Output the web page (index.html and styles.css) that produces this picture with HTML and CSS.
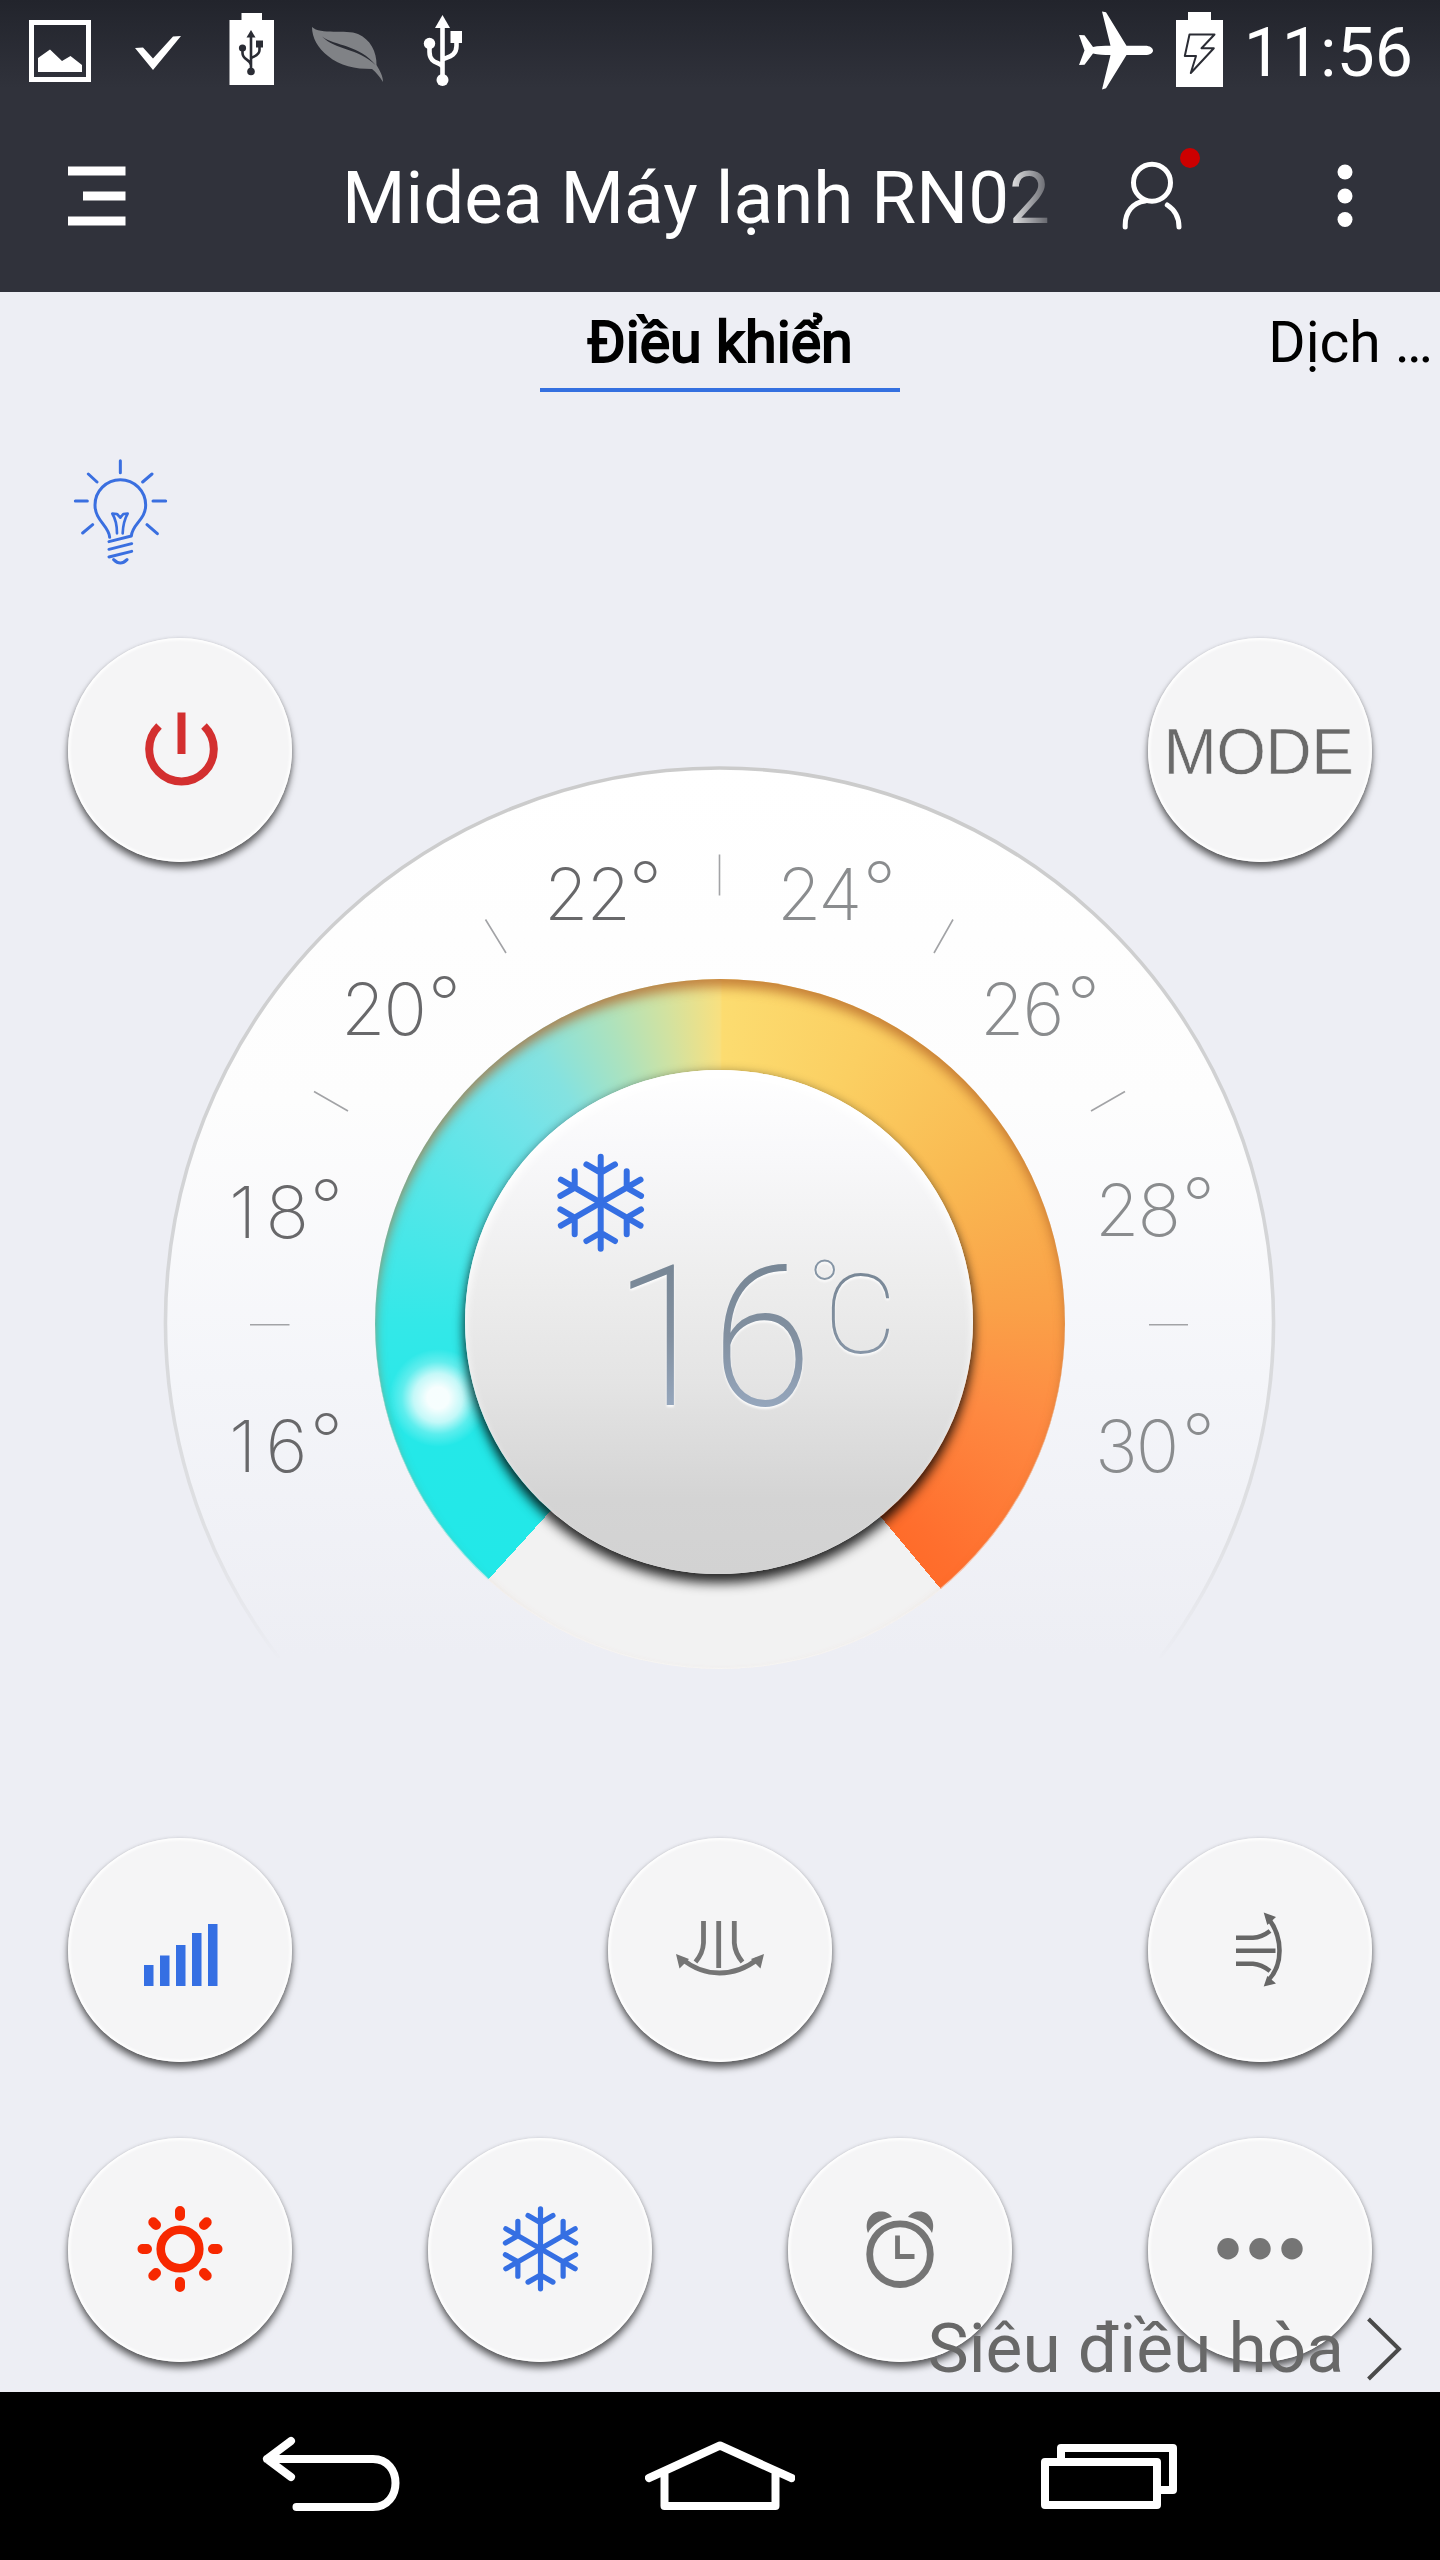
FILE: index.html
```html
<!DOCTYPE html>
<html lang="vi">
<head>
<meta charset="utf-8">
<title>Midea</title>
<link rel="stylesheet" href="styles.css">
</head>
<body>
<svg class="defs" width="0" height="0" aria-hidden="true">
  <defs>
    <g id="flake-arm"><path d="M0 0V-46M-14.3-38.3L0-30L14.3-38.3"/></g>
    <g id="flake">
      <use href="#flake-arm"/>
      <use href="#flake-arm" transform="rotate(60)"/>
      <use href="#flake-arm" transform="rotate(120)"/>
      <use href="#flake-arm" transform="rotate(180)"/>
      <use href="#flake-arm" transform="rotate(240)"/>
      <use href="#flake-arm" transform="rotate(300)"/>
    </g>
  </defs>
</svg>
<div class="screen">
  <header class="header">
    <div class="status">
      <div class="status-left">
        <svg viewBox="20 0 80 100" width="80" height="100"><path d="M31.500 22.500H88.500V79.500H31.500Z" fill="none" stroke="#fff" stroke-width="5"/><path d="M38 58L50 49.500L62 61L70.500 56L82 65V72H38Z" fill="#fff"/></svg>
        <svg viewBox="116 0 80 100" width="80" height="100"><path d="M135 48L143 47.500L153 58.500L173 36.500L181 36L153 70Z" fill="#fff"/></svg>
        <svg viewBox="212 0 80 100" width="80" height="100"><path d="M241.500 13H262V20H274V85H229.500V20H241.500Z" fill="#fff"/><g fill="#2a2c34" stroke="#2a2c34"><path d="M251 30L255.500 37.500H246.500Z" stroke="none"/><circle cx="251" cy="71.500" r="3.800" stroke="none"/><circle cx="242.500" cy="48" r="3.600" stroke="none"/><path d="M256 40.500H263V47.500H256Z" stroke="none"/><path d="M251 36V70M242.500 49V53C242.500 60 250 59 251 65M259.500 47V50C259.500 57 251 56 251 59" fill="none" stroke-width="2.600"/></g></svg>
        <svg viewBox="308 0 80 100" width="80" height="100"><path d="M312 27C320 35 346 29 358 34C370 39 377 52 376.500 65C380 71 383 76 383 82C379 76 376 72 372 69C355 69 340 66 328 56C318 48 312 38 312 27Z" fill="#808286"/><path d="M322 36.500C335 46 360 45 375.500 65C358 48 335 50 322 36.500Z" fill="#2a2c34"/></svg>
        <svg viewBox="404 0 80 100" width="80" height="100"><g fill="#fff" stroke="none"><path d="M442.500 15L450 28H435Z"/><circle cx="442.500" cy="80" r="6"/><circle cx="429.500" cy="43.500" r="5.700"/><path d="M450.500 31H462V43H450.500Z"/></g><path d="M442.500 26V78M429.500 46V52C429.500 64 441 62 442.500 67M456.500 42V46C456.500 58 444 57 442.500 60" fill="none" stroke="#fff" stroke-width="4.600"/></svg>
      </div>
      <div class="status-right">
        <svg viewBox="1070 0 100 100" width="100" height="100"><path d="M1079 35L1084.500 35.300L1093 47C1098 45.800 1104 45.800 1110.500 45.700L1102 11.500L1106 12.300L1126.500 45.700H1145C1150 45.700 1153 48 1153 50.500C1153 53 1150 55 1145 55H1126.500L1106 88.300L1102 89.500L1110.500 55C1104 55 1098 54.800 1093 53.500L1084.500 64.700L1079 65L1084.500 50.500Z" fill="#fff"/></svg>
        <svg viewBox="1170 0 60 100" width="60" height="100"><path d="M1188 12H1211V20H1223V87H1176V20H1188Z" fill="#fff"/><path d="M1189.500 34.500H1214.500L1201.500 48.300H1213.800L1190.800 73L1196 56H1184.800Z" fill="none" stroke="#2a2c34" stroke-width="2" stroke-linejoin="round"/></svg>
        <span class="clock">11:56</span>
      </div>
    </div>
    <div class="appbar">
      <svg class="menu" viewBox="0 0 58 60" width="58" height="60"><path d="M0 0.500H57.500V9.500H0ZM15 25.500H57.500V34.500H15ZM0 50.500H57.500V59.500H0Z" fill="#fff"/></svg>
      <h1 class="title">Midea Máy lạnh RN02</h1>
      <svg class="user" viewBox="1110 140 90 100" width="90" height="100"><g fill="none" stroke="#fff" stroke-width="5" stroke-linecap="round"><circle cx="1152" cy="182.700" r="18.500"/><path d="M1125.200 227V225C1125.200 212 1133 202.500 1145 201M1167.300 205C1175 210 1179 217 1179 227"/></g><circle cx="1190" cy="158" r="10" fill="#c00"/></svg>
      <svg class="more" viewBox="0 0 16 64" width="16" height="64"><g fill="#fff"><circle cx="8" cy="8" r="7.500"/><circle cx="8" cy="32" r="7.500"/><circle cx="8" cy="55.500" r="7.500"/></g></svg>
    </div>
  </header>

  <main class="panel">
    <nav class="tabs">
      <span class="tab tab-active">Điều khiển</span>
      <span class="tab tab-next">Dịch …</span>
    </nav>
    <svg class="bulb" viewBox="0 0 390 420" width="130" height="140"><g fill="none" stroke="#3a6fe0" stroke-width="9" stroke-linecap="round" stroke-linejoin="round"><path d="M149 292C147 258 105 242 105 195A76 76 0 0 1 257 195C257 240 216 252 214 288L147 305M147 328L215 311M147 351L215 334M161 359Q181 379 201 359"/><path d="M171 280C171 255 169 240 157 221L171 222L181 233L190 222L203 221C192 240 189 255 188 280" stroke-width="8"/><path d="M181 62V98M85 102L111 126M276 102L248 126M46 183H82M279 183H317M98 254L68 279M261 254L292 281"/></g></svg>

    <div class="row row-top">
      <button class="knob-btn" aria-label="Power"><svg viewBox="0 1 224 224"><path d="M91 89A32.300 32.300 0 1 0 136 89" fill="none" stroke="#d32f2f" stroke-width="8"/><path d="M113.500 75.500V117" stroke="#d32f2f" stroke-width="8"/></svg></button>
      <button class="knob-btn mode">MODE</button>
    </div>

    <section class="dial">
      <svg class="dial-face" viewBox="160 760 1120 920" width="1120" height="920">
        <defs>
          <linearGradient id="face" x1="0" y1="0" x2="0" y2="1"><stop offset="0" stop-color="#fff"/><stop offset=".3" stop-color="#fdfdfd"/><stop offset=".55" stop-color="#f4f5f9"/><stop offset=".8" stop-color="#edeef4"/><stop offset="1" stop-color="#edeef4"/></linearGradient>
          <linearGradient id="rim" gradientUnits="userSpaceOnUse" x1="0" y1="767" x2="0" y2="1665"><stop offset="0" stop-color="#cbcbcb"/><stop offset=".5" stop-color="#d3d4d6"/><stop offset=".85" stop-color="#dfe0e3"/><stop offset="1" stop-color="#edeef4"/></linearGradient>
        </defs>
        <circle cx="719.500" cy="1322" r="554" fill="url(#face)"/>
        <path d="M279 1658A554 554 0 1 1 1160 1658" fill="none" stroke="url(#rim)" stroke-width="3.600"/>
      </svg>
      <div class="ring"></div>
      <div class="spot"></div>
      <div class="knob"></div>
      <svg class="dial-text" viewBox="160 760 1120 920" width="1120" height="920">
        <defs>
          <linearGradient id="ink" gradientUnits="userSpaceOnUse" x1="0" y1="1265" x2="0" y2="1406"><stop offset="0" stop-color="#788796"/><stop offset=".5" stop-color="#8290a0"/><stop offset="1" stop-color="#95a6bc"/></linearGradient>
        </defs>
        <path d="M719.500 854.500V895.500M485.500 919.500L506 953M314 1091.500L348 1111M250 1324.700H289.500M953 919.500L934 953M1125 1091.500L1091 1111M1149 1324.700H1188" stroke="#a2a3a6" stroke-width="1.600" fill="none"/>
        <g class="labels">
          <text x="229" y="1471.500">1<tspan dx="11">6</tspan><tspan x="310" dy="-7">°</tspan></text>
          <text x="229" y="1238">1<tspan dx="11">8</tspan><tspan x="310" dy="-7">°</tspan></text>
          <text x="341" y="1034.500">20<tspan x="428" dy="-7">°</tspan></text>
          <text x="544" y="919.500">22<tspan x="629" dy="-7">°</tspan></text>
        </g>
        <g class="labels labels-warm">
          <text x="777" y="919.500">24<tspan x="863" dy="-7">°</tspan></text>
          <text x="980" y="1034.500">26<tspan x="1067" dy="-7">°</tspan></text>
          <text x="1095" y="1236">28<tspan x="1182" dy="-7">°</tspan></text>
          <text x="1095" y="1471.500">30<tspan x="1182" dy="-7">°</tspan></text>
        </g>
        <use href="#flake" transform="translate(600.700 1202.700)" fill="none" stroke="#356fe3" stroke-width="6" stroke-linecap="round"/>
        <g class="reading" fill="url(#ink)"><text class="degrees" transform="translate(614 0) scale(.93 1)" x="0 105" y="1405">16</text><circle cx="824.700" cy="1269.700" r="9.300" fill="none" stroke="#8595a5" stroke-width="2"/><text class="unit" x="824" y="1353">C</text></g>
      </svg>
    </section>

    <div class="row row-mid">
      <button class="knob-btn" aria-label="Fan speed"><svg viewBox="0 1 224 224"><path d="M76 128H85.500V149H76ZM92 118.500H101.500V149H92ZM108 108H117.500V149H108ZM124 96H133.500V149H124ZM140 87H149.500V149H140Z" fill="#356fe3"/></svg></button>
      <button class="knob-btn" aria-label="Swing left right"><svg viewBox="0 1 224 224"><path d="M95.500 84V106Q95 116 87.500 125M110.700 84V131M126.300 84V106Q127 116 134.500 125M74 122Q91 136 111.500 136T150 122" fill="none" stroke="#757575" stroke-width="4.800"/><path d="M68 117L81 122L71.500 131.500ZM156 117L143 122L152.500 131.500Z" fill="#757575"/></svg></button>
      <button class="knob-btn" aria-label="Swing up down"><svg viewBox="0 1 224 224"><path d="M88 100.800H105Q113.500 100.500 122 94M88 113.800H127.500M88 126.800H105Q113.500 127.500 122 134M120.500 81.500Q131.500 96 131.500 113.800T120.500 143" fill="none" stroke="#666" stroke-width="4.600"/><path d="M115.700 75.500L128 80L119.300 88ZM115.700 149.500L128 146.500L119.300 139Z" fill="#666"/></svg></button>
    </div>

    <div class="row row-bottom">
      <button class="knob-btn" aria-label="Heat"><svg viewBox="0 1 224 224"><g fill="none" stroke="#f72800"><circle cx="112" cy="112" r="19.300" stroke-width="8.600"/><path d="M112 74V79M112 145V150M74.500 112H79M145 112H149.500M85.300 85.300L88 88M136 136L138.700 138.700M85.300 138.700L88 136M136 88L138.700 85.300" stroke-width="10" stroke-linecap="round"/></g></svg></button>
      <button class="knob-btn" aria-label="Cool"><svg viewBox="0 1 224 224"><use href="#flake" transform="translate(112.500 111.800) scale(.87)" fill="none" stroke="#356fe3" stroke-width="6" stroke-linecap="round"/></svg></button>
      <button class="knob-btn" aria-label="Timer"><svg viewBox="0 1 224 224"><circle cx="112" cy="117.200" r="30.300" fill="none" stroke="#757575" stroke-width="6.800"/><path d="M109.500 98.500V119.500H126.500" fill="none" stroke="#757575" stroke-width="4.800"/><path d="M80 96C76 85 82 74.500 92.500 74.500C98 74.500 101.500 76.500 104 80C93 82 84 88 80 96ZM144 96C148 85 142 74.500 131.500 74.500C126 74.500 122.500 76.500 120 80C131 82 140 88 144 96Z" fill="#757575"/></svg></button>
      <button class="knob-btn" aria-label="More"><svg viewBox="0 1 224 224"><g fill="#757575"><circle cx="80" cy="111.800" r="10.700"/><circle cx="112" cy="111.800" r="10.700"/><circle cx="144" cy="111.800" r="10.700"/></g></svg></button>
    </div>
    <a class="super"><span>Siêu điều hòa</span><svg viewBox="0 0 36 66" width="36" height="66"><path d="M2.500 3L33 33L2.500 63" fill="none" stroke="#4a4a4a" stroke-width="4"/></svg></a>
  </main>

  <footer class="navbar">
    <svg viewBox="255 2392 150 168" width="150" height="168"><path d="M291 2441L267 2459L291 2477M267 2459H373C403 2459 403 2507 373 2507H296.500" fill="none" stroke="#fff" stroke-width="8" stroke-linecap="round" stroke-linejoin="round"/></svg>
    <svg viewBox="645 2392 150 168" width="150" height="168"><path d="M649 2478L720 2445.500L791.500 2478M664.500 2474V2506H775.500V2474" fill="none" stroke="#fff" stroke-width="8" stroke-linecap="round" stroke-linejoin="round"/></svg>
    <svg viewBox="1035 2392 150 168" width="150" height="168"><path d="M1045 2462H1157V2505H1045ZM1061 2460V2448H1173V2490H1159" fill="none" stroke="#fff" stroke-width="8" stroke-linejoin="round"/></svg>
  </footer>
</div>
</body>
</html>
```
FILE: styles.css
```css
* { box-sizing: border-box; }
body { margin: 0; background: #edeef4; font-family: Roboto, "Noto Sans", sans-serif; }
svg { display: block; flex: none; }
.defs { position: absolute; }
.screen { width: 1440px; height: 2560px; display: flex; flex-direction: column; overflow: hidden; }

.header { height: 292px; background: linear-gradient(#22242c, #30323b 88px); color: #fff; }
.status { height: 100px; display: flex; justify-content: space-between; padding: 0 27px 0 20px; }
.status-left { display: flex; gap: 16px; }
.status-right { display: flex; align-items: flex-start; }
.clock { width: 183px; text-align: right; font-size: 68px; line-height: 80px; margin-top: 13px; }

.appbar { height: 192px; display: flex; align-items: center; padding-left: 68px; }
.title { width: 708px; margin: 0 0 0 216px; padding: 3px 0 0; font-size: 72.8px; font-weight: 400; line-height: 96px; white-space: nowrap; overflow: hidden;
  -webkit-mask-image: linear-gradient(90deg, #000 660px, transparent 722px); mask-image: linear-gradient(90deg, #000 660px, transparent 722px); }
.user { margin: -12px 0 0 60px; }
.more { margin-left: 137px; }

.panel { height: 2100px; position: relative; background: #edeef4; }
.tabs { height: 100px; display: grid; grid-template-columns: 540px 360px 540px; color: #000; font-size: 56px; line-height: 66px; }
.tab { padding-top: 18px; white-space: nowrap; }
.tab-active { grid-column: 2; text-align: center; font-size: 57.4px; border-bottom: 4px solid #3570e0; -webkit-text-stroke: 2px #000; }
.tab-next { text-align: right; padding-right: 7px; font-size: 57px; }
.bulb { margin: 48px 0 58px 60px; }

.row { display: flex; justify-content: space-between; padding: 0 68px; position: relative; z-index: 1; }
.knob-btn { width: 224px; height: 224px; padding: 0; border: 0; border-radius: 50%; background: #f5f5f6;
  box-shadow: inset 0 0 3px 2px #fff, 0 6px 7px rgba(0,0,0,.55), 0 1px 4px rgba(0,0,0,.2); }
.knob-btn svg { width: 224px; height: 224px; }
.mode { padding: 3px 3px 0 0; font: 64px/72px "Liberation Sans", sans-serif; letter-spacing: -.5px; color: #6a6a6a; -webkit-text-stroke: .6px #f5f5f6; }

.dial { width: 1120px; height: 920px; margin: -102px auto 0; position: relative; }
.dial-face, .dial-text { position: absolute; inset: 0; }
.ring { position: absolute; left: 215px; top: 219px; width: 690px; height: 690px; border-radius: 50%;
  background: conic-gradient(from 222.2deg,
    #22e8e8 0deg, #24e8e8 25deg, #33e8e8 48deg, #58e6e8 75deg, #74e3e8 94deg, #84e2e0 104deg, #aee2bc 118deg, #d2e2a0 128deg, #f8e080 137.8deg,
    #fcdc70 138.2deg, #fbcf62 165deg, #f9ba52 195deg, #faa148 225deg, #fe8a42 245deg, #ff6f2e 273deg, #ff6c2a 278deg,
    #f2f2f2 278deg, #f2f2f2 360deg);
  box-shadow: inset 0 9px 12px -1px rgba(180,100,40,.75), inset 0 -1px 1px #f8f8f8; }
.spot { position: absolute; left: 229px; top: 589px; width: 98px; height: 98px; border-radius: 50%;
  background: radial-gradient(circle closest-side, rgba(255,255,255,.96) 22%, rgba(255,255,255,.72) 50%, rgba(255,255,255,.25) 74%, rgba(255,255,255,0)); }
.knob { position: absolute; left: 305px; top: 310px; width: 508px; height: 504px; border-radius: 50%;
  background: linear-gradient(#fff 0%, #f8f8fa 17%, #ededed 42%, #e4e4e4 62%, #d4d4d4 85%, #d2d2d2);
  box-shadow: inset 0 8px 10px #fff, 0 9px 12px rgba(0,0,0,.8), 0 0 10px rgba(0,0,0,.25); }
.labels { font-family: Inter, sans-serif; font-weight: 200; font-size: 72px; letter-spacing: -2px; fill: #68686a; }
.labels-warm { fill: #8a8c8e; }
.degrees { font-weight: 200; font-size: 196px; }
.unit { font-weight: 100; font-size: 112px; }
.reading { filter: drop-shadow(0 2px 1px rgba(255,255,255,.9)); }

.row-mid { margin-top: 158px; }
.row-bottom { margin-top: 76px; }
.super { position: absolute; right: 38px; bottom: -3px; height: 92px; display: flex; align-items: center; gap: 22px; font-size: 69.4px; line-height: 80px; color: #686868; z-index: 2; }

.navbar { height: 168px; background: #000; display: grid; grid-template-columns: repeat(3, 390px); justify-content: center; justify-items: center; }
```
